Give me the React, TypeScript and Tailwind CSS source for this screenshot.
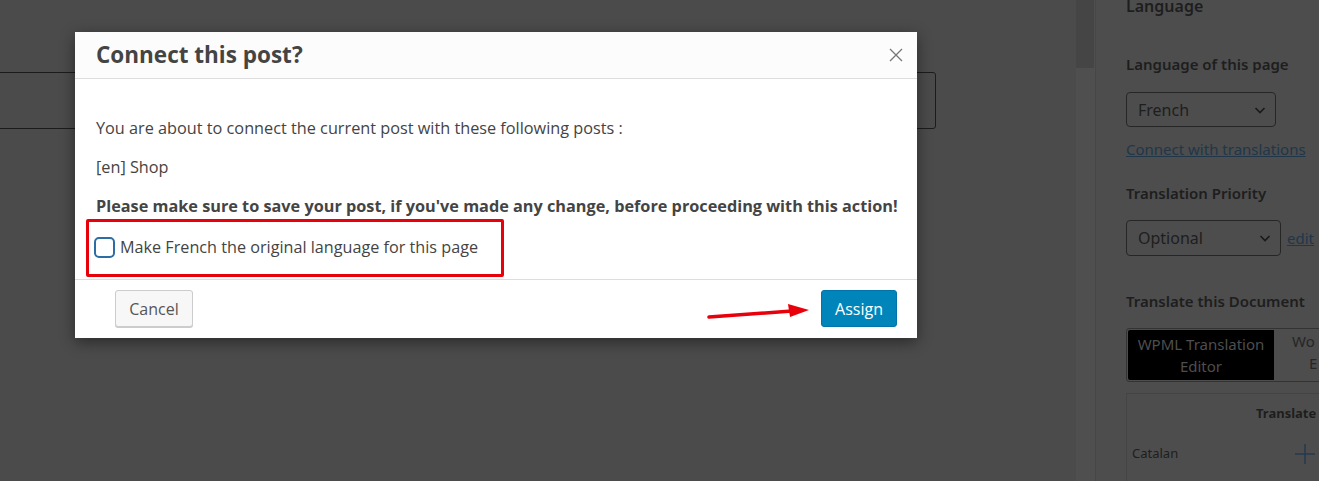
import React from 'react';

const Chevron: React.FC = () => (
    <svg width="14" height="14" viewBox="0 0 14 14" className="shrink-0">
        <path d="M2.5 5 L7 9.5 L11.5 5" fill="none" stroke="#1a1a1a" strokeWidth="1.6" />
    </svg>
);

const App: React.FC = () => {
    return (
        <div className="relative flex h-[481px] w-[1319px] overflow-hidden bg-[#4b4b4b]" style={{ fontFamily: '"Open Sans", sans-serif' }}>
            {/* Editor area under the overlay */}
            <main className="w-[1076px] shrink-0 pt-[72px]">
                <div className="-ml-[2px] h-[57px] w-[938px] rounded-r-[3px] border border-[#1c1c1c]" />
            </main>

            {/* Scrollbar */}
            <div className="w-[19px] shrink-0 bg-[#4f4f4f]">
                <div className="h-[68px] w-[18px] bg-[#454545]" />
            </div>

            {/* Sidebar */}
            <aside
                className="w-[224px] shrink-0 border-l border-[#474747] bg-[#4d4d4d] pl-[30px] text-[#1e1e1e]"
                style={{ fontFamily: '"Noto Sans", sans-serif' }}
            >
                <div className="-mt-[4px] h-[20px] text-[16px] leading-[20px] font-semibold">Language</div>
                <div className="mt-[38px] h-[20px] text-[15px] leading-[20px] font-semibold">Language of this page</div>
                <div className="mt-[18px] flex h-[35px] w-[150px] items-center justify-between rounded-[4px] border border-[#262626] pl-[11px] pr-[8px] text-[16px]">
                    <span>French</span>
                    <Chevron />
                </div>
                <div className="mt-[12px] h-[20px] text-[15px] leading-[20px] text-[#20374a] underline">Connect with translations</div>
                <div className="mt-[24px] h-[20px] text-[15px] leading-[20px] font-semibold">Translation Priority</div>
                <div className="mt-[17px] flex items-center gap-[6px]">
                    <div className="flex h-[36px] w-[155px] items-center justify-between rounded-[4px] border border-[#262626] pl-[11px] pr-[8px] text-[16px]">
                        <span>Optional</span>
                        <Chevron />
                    </div>
                    <span className="text-[15px] text-[#20374a] underline">edit</span>
                </div>
                <div className="mt-[35px] h-[20px] text-[15px] leading-[20px] font-semibold">Translate this Document</div>
                <div className="mt-[17px] flex h-[54px] w-[220px] rounded-l-[3px] border border-[#333] p-[1px]">
                    <div className="flex w-[146px] shrink-0 flex-col items-center justify-center rounded-l-[2px] bg-black text-[15px] leading-[22px] text-[#4e4e4e]">
                        <span>WPML Translation</span>
                        <span>Editor</span>
                    </div>
                    <div className="flex flex-col items-start pl-[18px] text-[15px] leading-[22px] text-[#262626]">
                        <span>Wo</span>
                        <span className="pl-[17px]">E</span>
                    </div>
                </div>
                <div className="mt-[11px] h-[100px] w-[220px] border border-[#444]">
                    <div className="flex h-[40px] items-center pl-[129px] text-[13px] font-bold">Translate</div>
                    <div className="flex h-[40px] items-center justify-between pl-[5px] text-[13px]">
                        <span>Catalan</span>
                        <svg width="22" height="22" viewBox="0 0 22 22" className="mr-[29px]">
                            <path d="M11 1 V21 M1 11 H21" stroke="#253a4c" strokeWidth="1.5" />
                        </svg>
                    </div>
                </div>
            </aside>

            {/* Modal */}
            <div className="absolute left-[75px] top-[32px] w-[842px] bg-white shadow-[0_4px_14px_rgba(0,0,0,0.45)]">
                <div className="flex h-[47px] items-center justify-between border-b border-[#dddddd] bg-[#fcfcfc] pl-[21px] pr-[14px]">
                    <h1 className="text-[22.5px] font-bold text-[#444]">Connect this post?</h1>
                    <svg width="14" height="14" viewBox="0 0 14 14">
                        <path d="M1 1 L13 13 M13 1 L1 13" stroke="#777" strokeWidth="1.3" />
                    </svg>
                </div>
                <div className="px-[21px] pb-[20px] pt-[37px] text-[16.25px] text-[#444]">
                    <p className="mb-[15px] leading-[24px]">You are about to connect the current post with these following posts :</p>
                    <p className="mb-[15px] leading-[24px]">[en] Shop</p>
                    <p className="mb-[17px] whitespace-nowrap leading-[24px] font-bold">
                        Please make sure to save your post, if you've made any change, before proceeding with this action!
                    </p>
                    <label className="flex items-center gap-[5px] leading-[24px] text-[16.2px]">
                        <span className="-ml-[2px] h-[21px] w-[21px] rounded-[5px] border-2 border-[#2e6da4] bg-white" />
                        <span>Make French the original language for this page</span>
                    </label>
                </div>
                <div className="flex items-center justify-between border-t border-[#dddddd] pb-[11px] pt-[10px] pl-[40px] pr-[20px]">
                    <button className="h-[37px] w-[78px] rounded-[3px] border border-[#cccccc] bg-[#f7f7f7] text-[16px] text-[#555] shadow-[0_1px_0_#cccccc]">
                        Cancel
                    </button>
                    <button className="h-[37px] w-[76px] rounded-[3px] border border-[#0073aa] bg-[#0085ba] text-[16px] text-white">
                        Assign
                    </button>
                </div>
            </div>

            {/* Annotations */}
            <div className="absolute left-[86px] top-[219px] h-[58px] w-[418px] rounded-[2px] border-[3px] border-[#e8000b]" />
            <svg className="absolute left-[700px] top-[298px]" width="115" height="28" viewBox="0 0 115 28">
                <path d="M9 19 L92 13" stroke="#e8000b" strokeWidth="3.5" strokeLinecap="round" />
                <path d="M88 6 L109 12 L90 19 Z" fill="#e8000b" />
            </svg>
        </div>
    );
};

export default App;
